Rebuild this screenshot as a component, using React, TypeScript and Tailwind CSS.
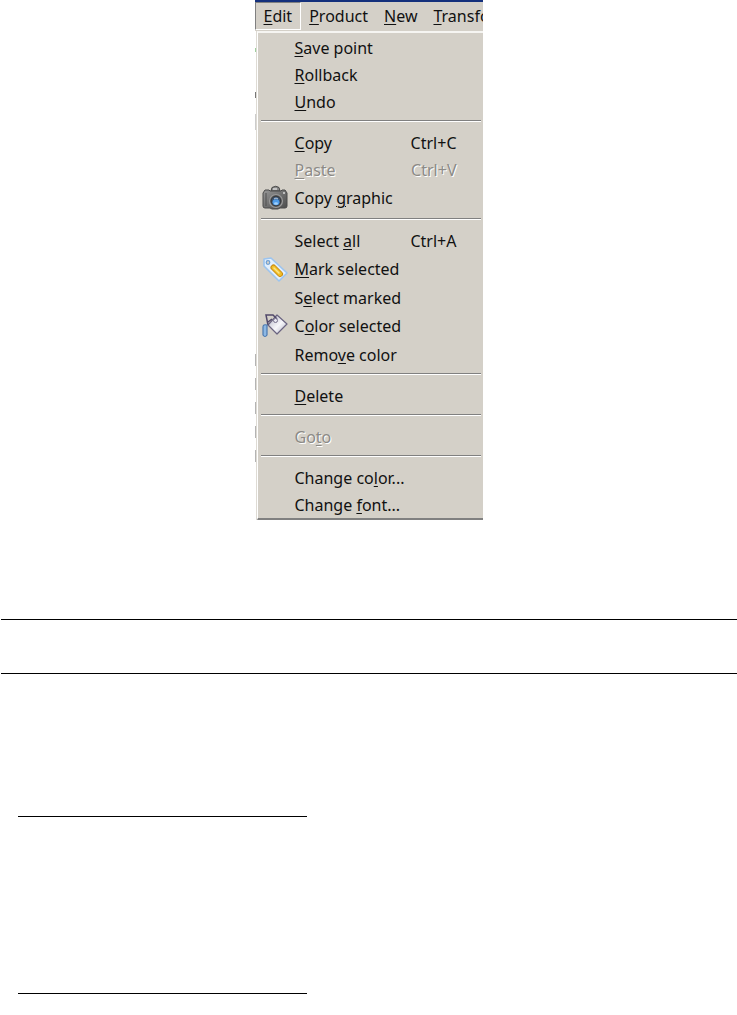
import { Fragment } from 'react';
import type { ReactNode } from 'react';

type Item = {
  label: string;
  // index of the underlined access key
  mnemonic?: number;
  shortcut?: string;
  disabled?: boolean;
  icon?: ReactNode;
};

const CameraIcon = () => (
  <svg width="26" height="26" viewBox="0 0 26 26" aria-hidden="true">
    <defs>
      <linearGradient id="cam-body" x1="0" y1="0" x2="1" y2="1">
        <stop offset="0" stopColor="#989898" />
        <stop offset="0.5" stopColor="#707070" />
        <stop offset="1" stopColor="#4a4a4a" />
      </linearGradient>
    </defs>
    <path d="M9 6 L10 2.5 Q14 0 17 2.5 L18 6 Z" fill="#8b8b8b" stroke="#4a4a4a" />
    <path d="M11 4 H15" stroke="#c4c4c4" strokeWidth="2" />
    <path d="M3 5 H7 L8 6 H19 L20 5 H23 L25 8 V21 Q25 23 23 23 H18 L16 24 H10 L8 23 H3 Q1 23 1 21 V8 Z" fill="url(#cam-body)" stroke="#4a4a4a" />
    <path d="M4 8 V21" stroke="#505050" />
    <path d="M21 8 H23" stroke="#bdbdbd" strokeWidth="2" />
    <circle cx="14" cy="16" r="6.5" fill="#5b5b5b" stroke="#9a9a9a" strokeWidth="1.2" />
    <circle cx="14" cy="16" r="4.8" fill="#3a5575" stroke="#383838" />
    <ellipse cx="14" cy="17.3" rx="3.4" ry="3" fill="#4e9be8" />
    <ellipse cx="14" cy="18.5" rx="2" ry="1.2" fill="#9fd0fb" />
    <path d="M12 14 Q14 12 16 14" fill="none" stroke="#b9cbe0" />
  </svg>
);

const TagIcon = () => (
  <svg width="26" height="26" viewBox="0 0 26 26" aria-hidden="true">
    <path d="M2 3 L9 2 L25 17 L17 25 L2 10 Z" fill="#e2effd" stroke="#9cc4ef" strokeWidth="1.6" strokeLinejoin="round" />
    <circle cx="6" cy="6.5" r="1.8" fill="#d4d0c8" stroke="#6d9fd4" strokeWidth="1.2" />
    <path d="M11.5 11.5 L18 18" stroke="#c98b12" strokeWidth="6" strokeLinecap="round" />
    <path d="M11.5 11.5 L18 18" stroke="#f0be28" strokeWidth="4" strokeLinecap="round" />
    <path d="M12 12 L17 17" stroke="#fbe58a" strokeWidth="1.5" strokeLinecap="round" />
  </svg>
);

const BucketIcon = () => (
  <svg width="26" height="26" viewBox="0 0 26 26" aria-hidden="true">
    <defs>
      <linearGradient id="bucket" x1="0" y1="0" x2="1" y2="1">
        <stop offset="0.2" stopColor="#c9c9d6" />
        <stop offset="0.55" stopColor="#f7f7fb" />
        <stop offset="1" stopColor="#a9a9bb" />
      </linearGradient>
    </defs>
    <path d="M15 2 L25 11 L15 21 L6 12 Z" fill="url(#bucket)" stroke="#6a6480" strokeWidth="1.2" strokeLinejoin="round" />
    <path d="M6 12 L4 2 L11 2 L15 6 M6 9 L10 6" fill="none" stroke="#51486a" strokeWidth="1.5" />
    <circle cx="13.5" cy="7.5" r="2" fill="#e9e9f1" stroke="#77718d" />
    <path d="M1 14 Q1 11 5 12 V22 Q3 25 1 22 Z" fill="#8db8e4" stroke="#4a78b0" strokeWidth="1.2" />
  </svg>
);

const menuBar: Item[] = [
  { label: 'Product', mnemonic: 0 },
  { label: 'New', mnemonic: 0 },
  { label: 'Transform', mnemonic: 0 },
];

const groups: Item[][] = [
  [
    { label: 'Save point', mnemonic: 0 },
    { label: 'Rollback', mnemonic: 0 },
    { label: 'Undo', mnemonic: 0 },
  ],
  [
    { label: 'Copy', mnemonic: 0, shortcut: 'Ctrl+C' },
    { label: 'Paste', mnemonic: 0, shortcut: 'Ctrl+V', disabled: true },
    { label: 'Copy graphic', mnemonic: 5, icon: <CameraIcon /> },
  ],
  [
    { label: 'Select all', mnemonic: 7, shortcut: 'Ctrl+A' },
    { label: 'Mark selected', mnemonic: 0, icon: <TagIcon /> },
    { label: 'Select marked', mnemonic: 1 },
    { label: 'Color selected', mnemonic: 1, icon: <BucketIcon /> },
    { label: 'Remove color', mnemonic: 4 },
  ],
  [{ label: 'Delete', mnemonic: 0 }],
  [{ label: 'Goto', mnemonic: 2, disabled: true }],
  [
    { label: 'Change color...', mnemonic: 9 },
    { label: 'Change font...', mnemonic: 7 },
  ],
];

const Label = ({ label, mnemonic = 0 }: Item) => (
  <span className="whitespace-pre">
    {label.slice(0, mnemonic)}
    <u className="underline decoration-1 underline-offset-2">{label[mnemonic]}</u>
    {label.slice(mnemonic + 1)}
  </span>
);

const MenuItem = (item: Item) => (
  <button
    type="button"
    role="menuitem"
    disabled={item.disabled}
    className={`flex w-full items-center pl-1 pr-[26px] text-left ${item.icon ? 'h-[30px]' : 'h-[27px]'} ${
      item.disabled ? 'text-[#8c8a86] [text-shadow:1px_1px_0_#ffffff]' : 'text-[#111111]'
    }`}
  >
    <span className="w-[33px] shrink-0">{item.icon}</span>
    <Label {...item} />
    {item.shortcut && <span className="ml-auto">{item.shortcut}</span>}
  </button>
);

export default function App() {
  return (
    <main className="bg-white font-['Noto_Sans',sans-serif] text-base leading-6">
      <section className="mx-auto w-[228px] overflow-hidden">
        {/* Menu bar */}
        <nav className="flex h-[31px] border-t-2 border-[#14307c] bg-[#d4d0c8] text-[#111111]">
          <button type="button" className="h-7 shrink-0 border border-t-[#808080] border-l-[#808080] border-r-white border-b-white px-2">
            <Label label="Edit" mnemonic={0} />
          </button>
          {menuBar.map((m) => (
            <button key={m.label} type="button" className="h-7 shrink-0 px-2">
              <Label {...m} />
            </button>
          ))}
        </nav>

        <div className="flex">
          {/* Sliver of the window behind the menu */}
          <div className="w-px shrink-0">
            <div className="mt-[17px] h-1 bg-[#9fd09f]" />
            <div className="mt-10 h-1.5 bg-[#777777]" />
            <div className="mt-4 h-4 bg-[#cccccc]" />
            <div className="mt-56 space-y-3">
              {[0, 1, 2, 3, 4].map((n) => (
                <div key={n} className="h-3 bg-[#b4b4b4]" />
              ))}
            </div>
          </div>

          {/* Drop-down */}
          <div className="grow border-l border-[#dedbd4]">
            <div role="menu" className="border-t-2 border-b-2 border-l border-t-[#f6f5f2] border-b-[#808080] border-l-white bg-[#d4d0c8] pt-px">
              {groups.map((group, i) => (
                <Fragment key={i}>
                  {i > 0 && <hr className="mt-[5px] mr-[2px] mb-[7px] ml-[3px] h-[2px] border-t border-b border-t-[#808080] border-b-white" />}
                  {group.map((item) => (
                    <MenuItem key={item.label} {...item} />
                  ))}
                </Fragment>
              ))}
            </div>
          </div>
        </div>
      </section>

      {/* Page rules */}
      <hr className="mt-[99px] ml-px border-black" />
      <hr className="mt-[53px] ml-px border-black" />
      <hr className="mt-[142px] ml-[18px] w-[289px] border-black" />
      <hr className="mt-44 ml-[18px] w-[289px] border-black" />
    </main>
  );
}
